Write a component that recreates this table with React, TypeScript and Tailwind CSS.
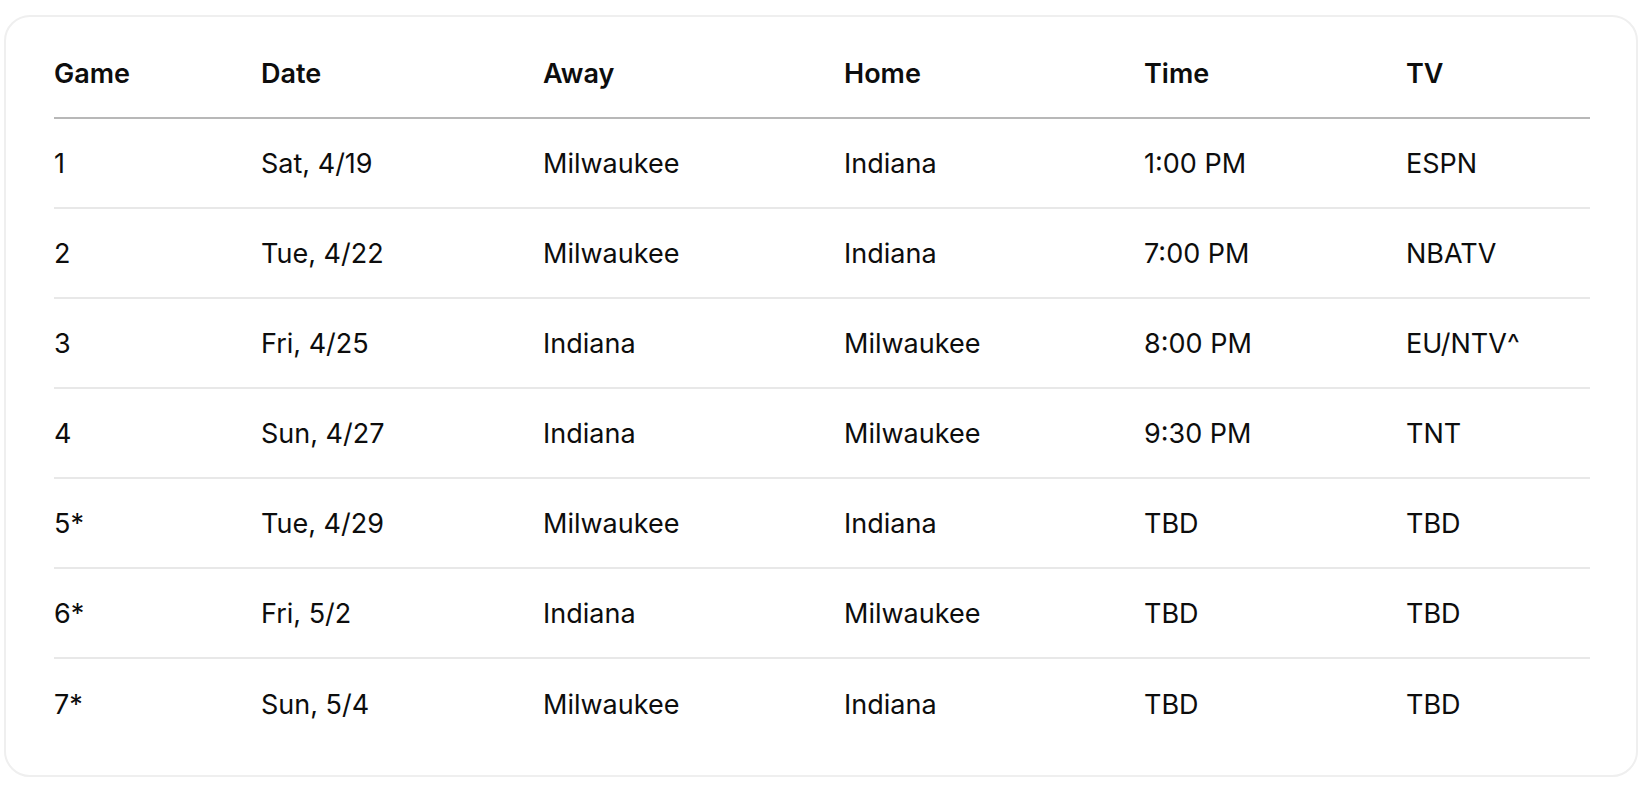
const rows = [
  ["1", "Sat, 4/19", "Milwaukee", "Indiana", "1:00 PM", "ESPN"],
  ["2", "Tue, 4/22", "Milwaukee", "Indiana", "7:00 PM", "NBATV"],
  ["3", "Fri, 4/25", "Indiana", "Milwaukee", "8:00 PM", "EU/NTV^"],
  ["4", "Sun, 4/27", "Indiana", "Milwaukee", "9:30 PM", "TNT"],
  ["5*", "Tue, 4/29", "Milwaukee", "Indiana", "TBD", "TBD"],
  ["6*", "Fri, 5/2", "Indiana", "Milwaukee", "TBD", "TBD"],
  ["7*", "Sun, 5/4", "Milwaukee", "Indiana", "TBD", "TBD"],
];

const headers = ["Game", "Date", "Away", "Home", "Time", "TV"];
const widths = ["w-[207px]", "w-[282px]", "w-[301px]", "w-[300px]", "w-[262px]", "w-[184px]"];

function App() {
  return (
    <div className="min-h-screen bg-white pt-[15px] pl-[4px] font-['Inter',sans-serif] text-[#0d0d0d]">
      <div className="w-[1634px] h-[762px] rounded-[26px] border-2 border-[#efefef] pl-[48px] pt-[10px]">
        <table className="w-[1536px] table-fixed border-collapse text-left text-[27px] leading-none">
          <thead>
            <tr className="border-b-2 border-[#b8b8b8]">
              {headers.map((h, i) => (
                <th key={h} className={`${widths[i]} h-[91px] p-0 pt-[2px] align-middle font-semibold`}>
                  {h}
                </th>
              ))}
            </tr>
          </thead>
          <tbody>
            {rows.map((r, ri) => (
              <tr key={ri} className={ri < rows.length - 1 ? "border-b-2 border-[#e8e8e8]" : ""}>
                {r.map((c, ci) => (
                  <td key={ci} className="h-[90px] p-0 pt-[1px] align-middle font-normal">
                    {c}
                  </td>
                ))}
              </tr>
            ))}
          </tbody>
        </table>
      </div>
    </div>
  );
}

export default App;
